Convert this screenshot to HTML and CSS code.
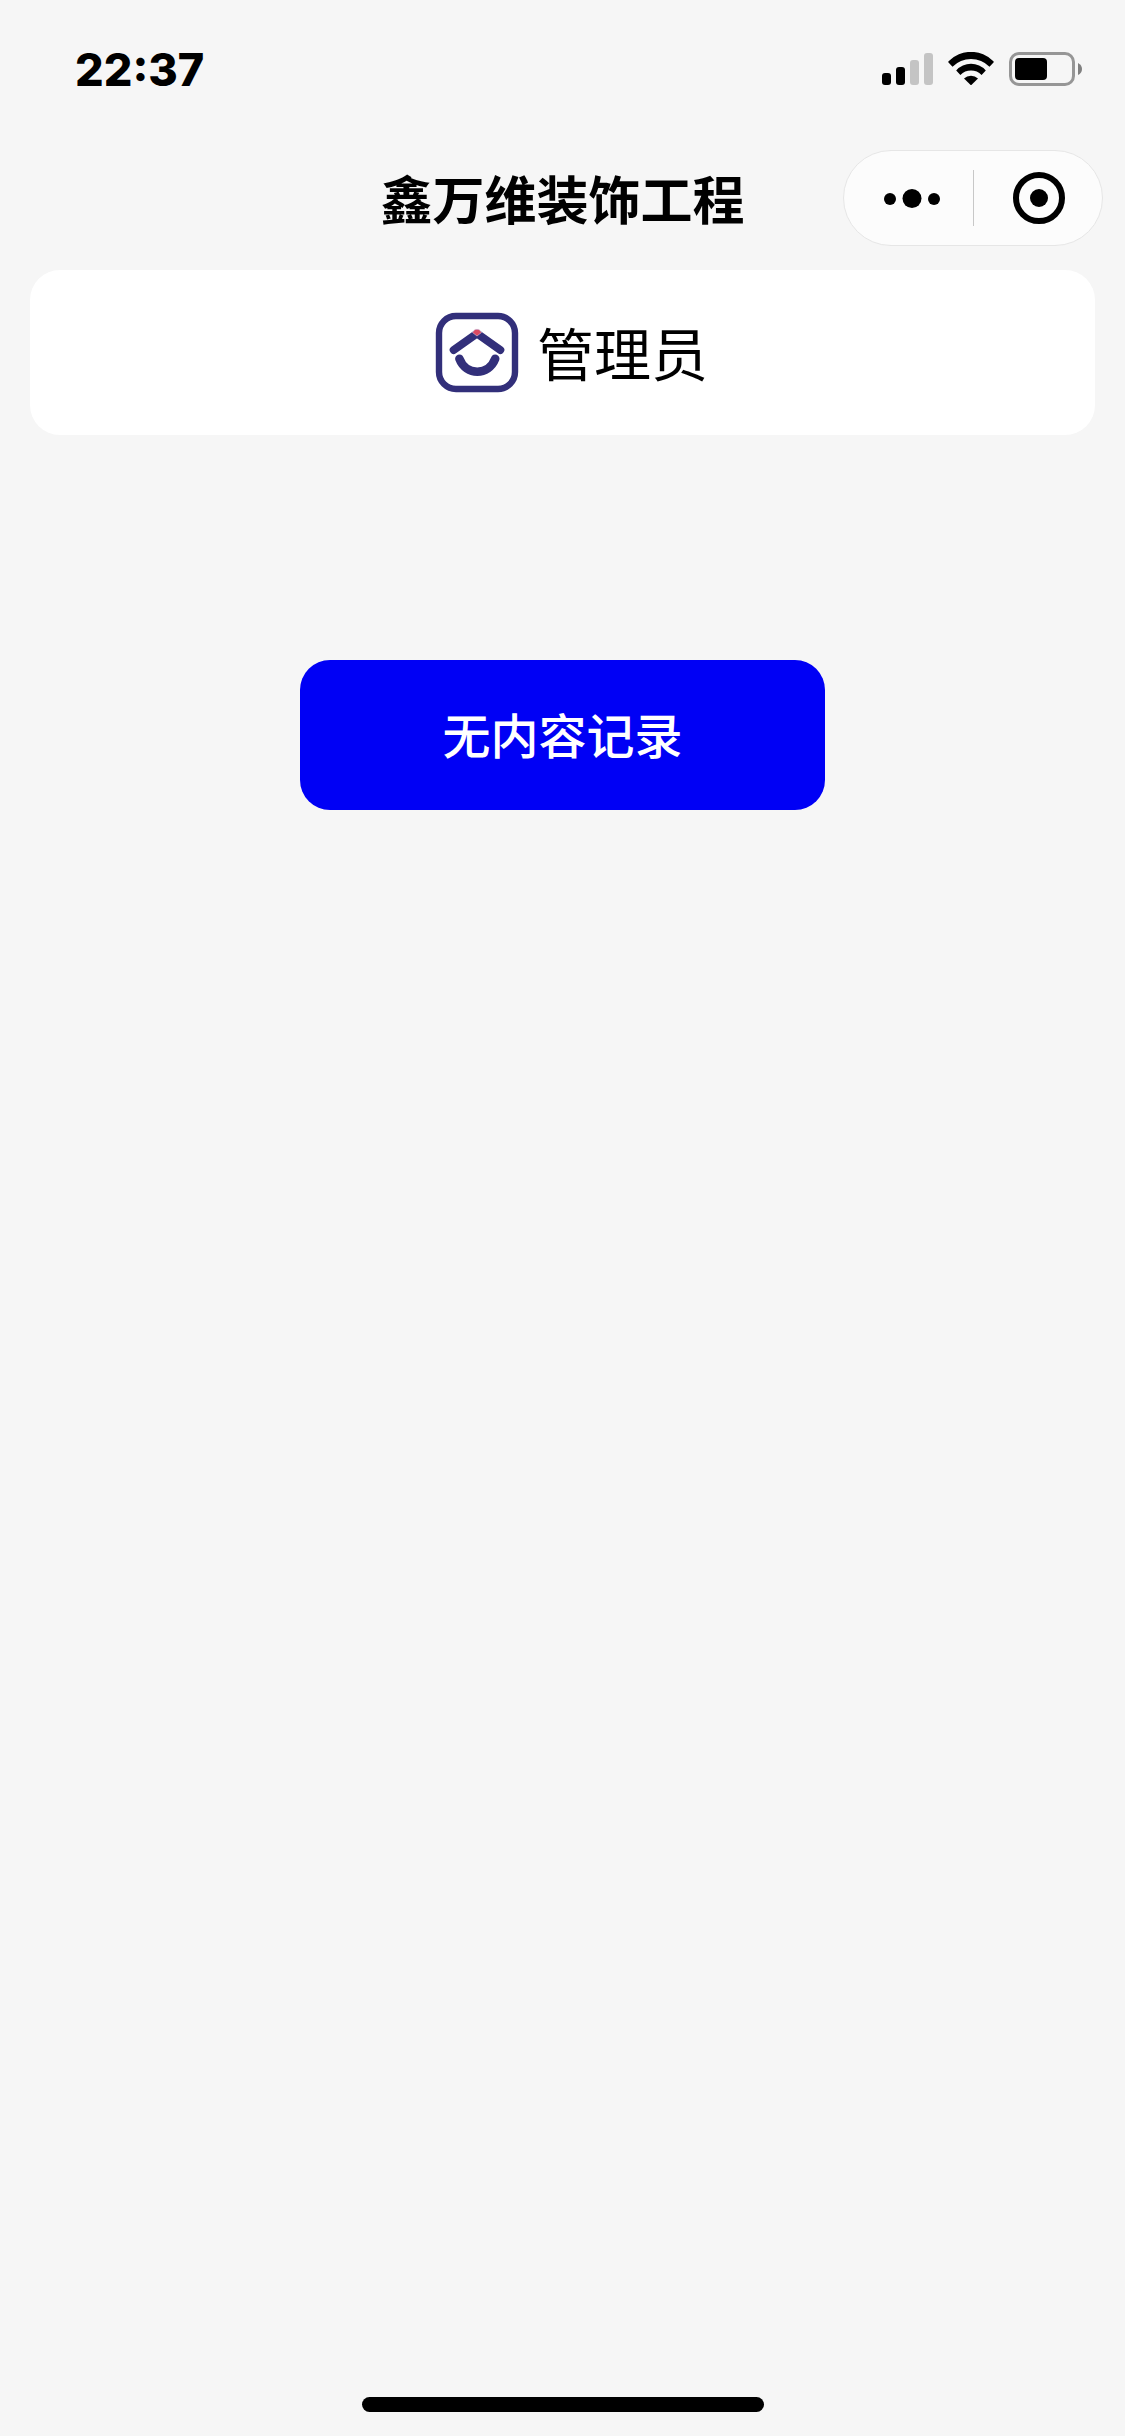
FILE: index.html
```html
<!DOCTYPE html>
<html lang="zh-CN">
<head>
    <meta charset="UTF-8">
    <meta name="viewport" content="width=device-width, initial-scale=1.0">
    <title>鑫万维装饰工程</title>
    <link rel="stylesheet" href="styles.css">
</head>
<body>
    <div class="status-bar">
        <time class="clock">22:37</time>
        <div class="status-icons">
            <svg width="51" height="34" viewBox="0 0 51 34" aria-hidden="true">
                <rect x="0" y="21" width="9" height="12" rx="3"/>
                <rect x="14" y="15" width="9" height="18" rx="3"/>
                <rect x="28" y="8" width="9" height="25" rx="3" fill="#c4c4c4"/>
                <rect x="42" y="1" width="9" height="32" rx="3" fill="#c4c4c4"/>
            </svg>
            <svg width="46" height="34" viewBox="0 0 46 34" aria-hidden="true">
                <path d="M0.5 10.5Q0 9.8 0.6 9.2A31.5 31.5 0 0 1 45.4 9.2Q46 9.8 45.5 10.5L41.5 14.8A26 26 0 0 0 4.5 14.8Z"/>
                <path d="M8.2 18.4A20 20 0 0 1 37.8 18.4L33.6 23A15 15 0 0 0 12.4 23Z"/>
                <path d="M16 26.6A10 10 0 0 1 30 26.6L23.6 32.7Q23 33.2 22.4 32.7Z"/>
            </svg>
            <svg width="73" height="34" viewBox="0 0 73 34" aria-hidden="true">
                <rect x="1.5" y="1.5" width="63" height="31" rx="8.5" fill="none" stroke="#969696" stroke-width="3"/>
                <rect x="6" y="6" width="32" height="22" rx="4"/>
                <path d="M69 11Q73 13 73 17Q73 21 69 23Z" fill="#808080"/>
            </svg>
        </div>
    </div>

    <header class="nav-bar">
        <h1 class="nav-title">鑫万维装饰工程</h1>
        <div class="capsule">
            <button type="button" class="capsule-button" aria-label="更多">
                <svg width="68" height="56" viewBox="0 0 68 56" aria-hidden="true">
                    <circle cx="16" cy="29" r="6"/>
                    <circle cx="38" cy="28.5" r="9.5"/>
                    <circle cx="60" cy="29" r="6"/>
                </svg>
            </button>
            <button type="button" class="capsule-button" aria-label="关闭">
                <svg width="56" height="56" viewBox="0 0 56 56" aria-hidden="true">
                    <circle cx="29" cy="28" r="23" fill="none" stroke="#000" stroke-width="6"/>
                    <circle cx="29" cy="28" r="9"/>
                </svg>
            </button>
        </div>
    </header>

    <main class="content">
        <section class="card">
            <svg class="logo" width="120" height="120" viewBox="0 0 120 120" aria-hidden="true">
                <g fill="none" stroke="#322f7a" stroke-linecap="round" stroke-linejoin="round">
                    <rect x="22" y="23" width="76" height="73" rx="17" stroke-width="6.4"/>
                    <path d="M36.7 57L60 40.6L83.3 57" stroke-width="8"/>
                    <path d="M42.4 65.8C49 83 71.6 83 78.2 65.8" stroke-width="8.6"/>
                </g>
                <path d="M55.5 39.5L58 36.4H62L64.5 39.5L60 43Z" fill="#dc4a62" stroke="#d9c3dd" stroke-width="0.6"/>
            </svg>
            <span class="role">管理员</span>
        </section>
        <button type="button" class="empty-button">无内容记录</button>
    </main>

    <div class="home-indicator"></div>
</body>
</html>
```

FILE: styles.css
```css
* {
    box-sizing: border-box;
}
body {
    display: flex;
    flex-direction: column;
    min-height: 100vh;
    margin: 0;
    background-color: #f6f6f6;
    color: #000;
    font-family: "Noto Sans CJK SC", sans-serif;
}
button {
    padding: 0;
    border: none;
    font-family: inherit;
    cursor: pointer;
}
svg {
    display: block;
}

/* status bar */
.status-bar {
    display: flex;
    align-items: center;
    justify-content: space-between;
    height: 132px;
    padding: 6px 43px 0 75px;
}
.clock {
    font-family: Inter, sans-serif;
    font-size: 45px;
    font-weight: 800;
}
.status-icons {
    display: flex;
    gap: 15px;
}

/* title and capsule menu */
.nav-bar {
    display: grid;
    grid-template-columns: 1fr auto 1fr;
    align-items: center;
    height: 132px;
    padding: 0 22px;
}
.nav-title {
    grid-column: 2;
    margin: 0;
    font-size: 52px;
    line-height: 72px;
    font-weight: 700;
}
.capsule {
    display: flex;
    align-items: center;
    justify-self: end;
    width: 260px;
    height: 96px;
    border: 1px solid #e6e6e6;
    border-radius: 48px;
    background-color: #fcfcfc;
}
.capsule-button {
    display: flex;
    flex: 1;
    align-items: center;
    justify-content: center;
    height: 56px;
    background: none;
}
.capsule-button + .capsule-button {
    border-left: 1px solid #c8c8c8;
}

/* page content */
.content {
    display: flex;
    flex: 1;
    flex-direction: column;
    align-items: center;
    padding: 6px 30px;
}
.card {
    display: flex;
    align-items: center;
    justify-content: center;
    align-self: stretch;
    min-height: 165px;
    border-radius: 30px;
    background-color: #fff;
}
.role {
    padding-bottom: 4px;
    font-size: 57px;
    line-height: 80px;
}
.empty-button {
    width: 100%;
    max-width: 525px;
    height: 150px;
    margin-top: 225px;
    padding-bottom: 4px;
    border-radius: 30px;
    background-color: #0000f5;
    color: #fff;
    font-size: 48px;
    font-weight: 500;
}

/* home indicator */
.home-indicator {
    align-self: center;
    width: 402px;
    height: 15px;
    margin-bottom: 24px;
    border-radius: 8px;
    background-color: #000;
}
```
